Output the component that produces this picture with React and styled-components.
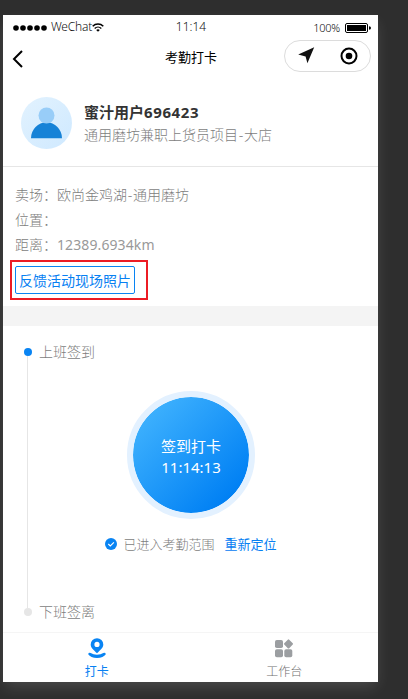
import React from "react";
import styled, { createGlobalStyle } from "styled-components";

const Global = createGlobalStyle`
  * { box-sizing: border-box; }
  body {
    margin: 0;
    background: #2e2e2e;
    font-family: "Noto Sans", "Noto Sans CJK SC", sans-serif;
    font-weight: 300;
    color: #7d7d7d;
  }
`;

const Stage = styled.div`
  width: 408px;
  height: 699px;
  padding: 15px 30px 17px 3px;
  overflow: hidden;
`;

const Phone = styled.main`
  display: flex;
  flex-direction: column;
  width: 375px;
  height: 667px;
  background: #fff;
  box-shadow: 0 6px 14px -2px rgba(255, 255, 255, 0.15);
`;

const StatusBar = styled.div`
  display: grid;
  grid-template-columns: 1fr 60px 1fr;
  align-items: center;
  height: 22px;
  padding: 0 7px 0 10px;
  font-size: 12px;
  line-height: 22px;
  color: #111;
`;

const Carrier = styled.div`
  display: flex;
  align-items: center;
  letter-spacing: -0.2px;
  svg { display: block; flex: none; }
`;

const Dots = styled.svg`
  margin: 2px 4px 0 0;
`;

const Clock = styled.div`
  margin-top: -1px;
  padding-right: 2px;
  text-align: center;
`;

const Power = styled.div`
  display: flex;
  align-items: center;
  justify-content: flex-end;
  gap: 5px;
  font-size: 11px;
  letter-spacing: -0.25px;
  padding-top: 2px;
  svg { display: block; }
`;

const NavBar = styled.header`
  display: grid;
  grid-template-columns: 87px 1fr 87px;
  align-items: center;
  height: 43px;
  padding: 0 7px 6px 8px;
`;

const Back = styled.svg`
  display: block;
  margin-top: 7px;
`;

const Title = styled.h1`
  margin: 2px 0 0;
  font-size: 13px;
  font-weight: 400;
  line-height: 20px;
  color: #000;
  text-align: center;
`;

const Capsule = styled.div`
  display: flex;
  align-items: center;
  justify-content: space-between;
  height: 32px;
  padding: 0 12px 0 13px;
  border: 1px solid #dcdcdc;
  border-radius: 16px;
  svg { display: block; }
`;

const Profile = styled.section`
  display: flex;
  align-items: center;
  gap: 12px;
  height: 87px;
  padding: 0 18px;
  border-bottom: 1px solid #e6e6e6;
`;

const Name = styled.div`
  font-size: 15px;
  font-weight: 700;
  line-height: 24px;
  color: #333;
  span { letter-spacing: 0.6px; }
`;

const Project = styled.div`
  font-size: 14px;
  line-height: 22px;
`;

const Dash = styled.span`
  padding: 0 0.7px;
`;

const Info = styled.section`
  height: 139px;
  padding: 16px 7px 0;
`;

const InfoRow = styled.div`
  height: 25px;
  padding-left: 5px;
  font-size: 14px;
  line-height: 24px;
`;

const Distance = styled.span`
  font-weight: 400;
  letter-spacing: 0.1px;
  color: #999;
`;

const Highlight = styled.div`
  width: 138px;
  height: 40px;
  margin-top: 2px;
  padding: 4px 3px;
  border: 2px solid #ec1c24;
`;

const PhotoButton = styled.button`
  display: block;
  width: 120px;
  height: 28px;
  padding: 0;
  border: 1px solid #0984f3;
  border-radius: 2px;
  background: #fff;
  color: #0780f2;
  font: inherit;
  font-size: 14px;
  font-weight: 400;
  line-height: 28px;
`;

const Band = styled.div`
  height: 20px;
  background: #f4f4f4;
`;

const Timeline = styled.section`
  display: grid;
  grid-template-columns: 8px 1fr;
  grid-template-rows: 20px 1fr 20px;
  column-gap: 7px;
  height: 306px;
  padding: 16px 21px 10px;
`;

const Dot = styled.i`
  align-self: center;
  width: 8px;
  height: 8px;
  border-radius: 50%;
  background: ${(p) => (p.$active ? "#0984f3" : "#e6e6e6")};
`;

const Rail = styled.div`
  width: 1px;
  margin: -6px 0 -6px 3px;
  background: #e6e6e6;
`;

const Step = styled.div`
  font-size: 14px;
  line-height: 20px;
`;

const PunchArea = styled.div`
  display: flex;
  flex-direction: column;
  align-items: center;
  padding: 29px 14px 0 0;
`;

const Punch = styled.button`
  flex: none;
  display: flex;
  flex-direction: column;
  align-items: center;
  justify-content: center;
  width: 128px;
  height: 128px;
  padding: 3px 0 0;
  border: 6px solid #e3f1ff;
  border-radius: 50%;
  background: linear-gradient(135deg, #48b9ff 0%, #0080f4 85%) padding-box;
  color: #fff;
  font: inherit;
  font-size: 15px;
  font-weight: 400;
  line-height: 21px;
`;

const Range = styled.div`
  display: flex;
  align-items: center;
  margin-top: 15px;
  font-size: 13px;
  line-height: 20px;
  svg { display: block; margin-right: 6px; }
`;

const Relocate = styled.a`
  margin-left: 10px;
  font-weight: 400;
  color: #0780f2;
`;

const TabBar = styled.nav`
  display: grid;
  grid-template-columns: 1fr 1fr;
  height: 50px;
  border-top: 1px solid #f5f5f5;
`;

const Tab = styled.a`
  display: flex;
  flex-direction: column;
  align-items: center;
  padding-top: 4px;
  font-size: 12px;
  font-weight: ${(p) => (p.$active ? 400 : 300)};
  line-height: 18px;
  color: ${(p) => (p.$active ? "#0780f2" : "#707070")};
  svg { display: block; margin-bottom: 4px; }
`;

export default function App() {
  return (
    <>
      <Global />
      <Stage>
        <Phone>
          <StatusBar>
            <Carrier>
              <Dots width="34" height="6" fill="#000">
                {[3, 10, 17, 24, 31].map((x) => (
                  <circle key={x} cx={x} cy="3" r="2.8" />
                ))}
              </Dots>
              WeChat
              <svg width="12" height="9" viewBox="0 0 12 9" fill="none" stroke="#000">
                <path d="M.7 3.3a7.5 7.5 0 0 1 10.6 0" strokeWidth="1.5" />
                <path d="M2.7 5.5a4.7 4.7 0 0 1 6.6 0" strokeWidth="1.4" />
                <path d="M4.2 7a2.6 2.6 0 0 1 3.6 0L6 8.8z" fill="#000" stroke="none" />
              </svg>
            </Carrier>
            <Clock>11:14</Clock>
            <Power>
              100%
              <svg width="26" height="10" viewBox="0 0 26 10">
                <rect x=".5" y=".5" width="22" height="9" rx="1.5" fill="none" stroke="#000" />
                <rect x="2" y="2" width="19" height="6" fill="#000" />
                <path d="M24 3.3q2 .2 2 1.7t-2 1.7z" fill="#000" />
              </svg>
            </Power>
          </StatusBar>
          <NavBar>
            <Back width="13" height="18" viewBox="0 0 13 18" fill="none" stroke="#000" strokeWidth="2">
              <path d="M11 1 3 9l8 8" />
            </Back>
            <Title>考勤打卡</Title>
            <Capsule>
              <svg width="17" height="17" viewBox="0 0 17 17" fill="#111">
                <path d="M16.2.2 9.4 16.2 7.6 9.6.2 7.6z" />
              </svg>
              <svg width="18" height="18" viewBox="0 0 18 18" fill="#000">
                <circle cx="9" cy="9" r="7.5" fill="none" stroke="#000" strokeWidth="2" />
                <circle cx="9" cy="9" r="3.3" />
              </svg>
            </Capsule>
          </NavBar>
          <Profile>
            <svg width="51" height="52" viewBox="0 0 51 52">
              <defs>
                <linearGradient id="avatar" x1="0" y1="0" x2="1" y2="1">
                  <stop stopColor="#e2f2fe" />
                  <stop offset="1" stopColor="#cfe9ff" />
                </linearGradient>
              </defs>
              <ellipse cx="25.5" cy="26" rx="25.5" ry="26" fill="url(#avatar)" />
              <path d="M10 41.3a15.3 15.8 0 0 1 31 0z" fill="#1682d7" />
              <circle cx="25.5" cy="18.5" r="8" fill="#98cdf8" />
            </svg>
            <div>
              <Name>蜜汁用户<span>696423</span></Name>
              <Project>通用磨坊兼职上货员项目<Dash>-</Dash>大店</Project>
            </div>
          </Profile>
          <Info>
            <InfoRow>卖场：欧尚金鸡湖<Dash>-</Dash>通用磨坊</InfoRow>
            <InfoRow>位置：</InfoRow>
            <InfoRow>距离：<Distance>12389.6934km</Distance></InfoRow>
            <Highlight>
              <PhotoButton>反馈活动现场照片</PhotoButton>
            </Highlight>
          </Info>
          <Band />
          <Timeline>
            <Dot $active />
            <Step>上班签到</Step>
            <Rail />
            <PunchArea>
              <Punch>
                <span>签到打卡</span>
                <span>11:14:13</span>
              </Punch>
              <Range>
                <svg width="12" height="12" viewBox="0 0 12 12">
                  <circle cx="6" cy="6" r="6" fill="#0984f3" />
                  <path d="m3.3 6 2 2 3.6-3.7" fill="none" stroke="#fff" strokeWidth="1.1" />
                </svg>
                已进入考勤范围
                <Relocate>重新定位</Relocate>
              </Range>
            </PunchArea>
            <Dot />
            <Step>下班签离</Step>
          </Timeline>
          <TabBar>
            <Tab $active>
              <svg width="20" height="22" viewBox="0 0 20 22" fill="#0984f3">
                <path
                  d="M10 1.200a6.300 6.300 0 0 0-6.300 6.300C3.700 11 7 13.300 10 16.200c3-2.900 6.300-5.200 6.300-8.700A6.300 6.300 0 0 0 10 1.200zm0 3.600a2.600 2.600 0 1 1 0 5.200 2.600 2.600 0 0 1 0-5.200z"
                  fillRule="evenodd"
                />
                <path d="M1.200 17.200q.4-2 2.500-1.100 2.500 1.500 6.300 1.600 3.800-.1 6.300-1.600 2.100-.9 2.500 1.100-2.400 3.700-8.800 3.700t-8.800-3.700z" />
              </svg>
              打卡
            </Tab>
            <Tab>
              <svg width="20" height="22" viewBox="0 0 20 22" fill="#9b9ea1">
                <rect x="1" y="3" width="8" height="8" rx="1.8" />
                <rect x="1" y="12.3" width="8" height="8" rx="1.8" />
                <rect x="10.3" y="12.3" width="8" height="8" rx="1.8" />
                <rect x="11" y="3.4" width="7" height="7" rx="1" transform="rotate(45 14.5 6.9)" />
              </svg>
              工作台
            </Tab>
          </TabBar>
        </Phone>
      </Stage>
    </>
  );
}
